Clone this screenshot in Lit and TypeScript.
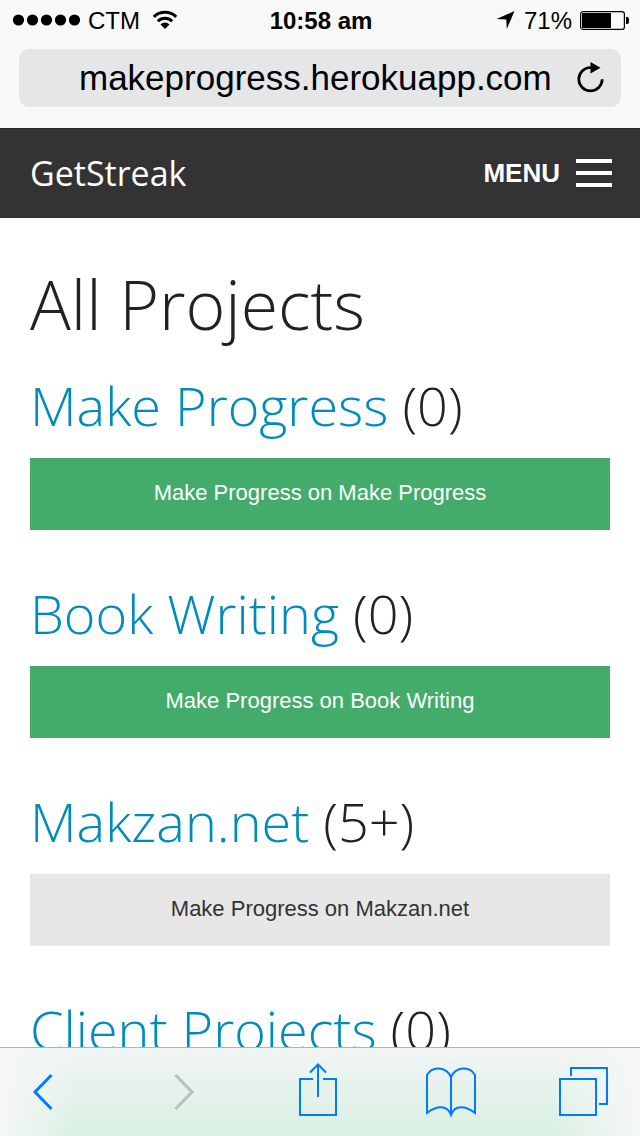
import { LitElement, html, css, nothing } from "lit";
import { customElement } from "lit/decorators.js";

interface Project { name: string; count: string; action?: "due" | "done"; }

const projects: Project[] = [
  { name: "Make Progress", count: "0", action: "due" },
  { name: "Book Writing", count: "0", action: "due" },
  { name: "Makzan.net", count: "5+", action: "done" },
  { name: "Client Projects", count: "0" },
];

@customElement("app-root")
export class AppRoot extends LitElement {
  static styles = css`
    :host { display: flex; flex-direction: column; height: 100vh; overflow: hidden; background: #fff; color: #222; font-family: "Liberation Sans", Arial, sans-serif; }
    * { box-sizing: border-box; }
    svg { display: block; overflow: visible; }
    button { border: 0; padding: 0; background: none; font-family: inherit; cursor: pointer; }
    .browser { flex: none; padding-bottom: 21px; background: #f8f8f8; }
    .status { display: grid; grid-template-columns: 1fr auto 1fr; align-items: center; height: 42px; padding: 0 11px 0 13px; font-size: 24px; color: #000; }
    .status svg { margin-bottom: 2px; }
    .left, .right { display: flex; align-items: center; gap: 8px; }
    .right { justify-content: flex-end; }
    .carrier { margin-right: 4px; }
    .time { font-weight: 700; }
    .address { display: flex; align-items: center; margin: 7px 19px 0; height: 58px; padding: 0 16px 0 60px; border-radius: 10px; background: #e5e6e8; }
    .url { flex: 1; min-width: 0; height: 56px; border: 0; padding: 0; background: none; text-align: left; font: 35px "Liberation Sans", Arial, sans-serif; color: #000; }
    .bar { flex: none; display: flex; align-items: center; justify-content: space-between; height: 90px; padding: 0 28px 0 30px; box-shadow: inset 0 1px #262626; background: #333; }
    .brand { font: 34px "Open Sans", sans-serif; color: #fff; text-decoration: none; }
    .menu { display: flex; align-items: center; gap: 16px; color: #fff; font-size: 26px; font-weight: 700; }
    .page { flex: 1; min-height: 0; overflow: hidden; padding: 40px 30px 0; }
    h1, h2 { margin: 0; font-family: "Open Sans", sans-serif; font-weight: 300; }
    h1 { margin-bottom: 20px; font-size: 68px; line-height: 92px; }
    h2 { margin-bottom: 18px; font-size: 54px; line-height: 70px; }
    h2 a { color: #008cba; text-decoration: none; }
    .project { padding-bottom: 48px; }
    .log { display: block; width: 100%; height: 72px; padding-bottom: 2px; font-size: 22px; }
    .due { background: #43ac6a; color: #fff; }
    .done { background: #e7e7e7; color: #333; }
    .tools {
      flex: none; display: flex; justify-content: space-between; align-items: center; height: 89px; padding: 0 30px 0 22px; border-top: 1px solid #b2b2b2; color: #007aff;
      background: linear-gradient(to right, #f6f7f7, rgba(246, 247, 247, 0) 12%, rgba(246, 247, 247, 0) 86%, #f6f7f7), linear-gradient(#f0f5f4, #d9efe2);
    }
    .tools button { color: inherit; }
    .tools button:disabled { color: #b6c0bb; }
    .line { fill: none; stroke: currentColor; stroke-width: 2; }
    .thick { fill: none; stroke: currentColor; stroke-width: 3; }
  `;

  render() {
    return html`
      <header class="browser">
        <div class="status">
          <div class="left">
            <svg width="67" height="12" role="img" aria-label="Signal strength">
              <circle cx="5.5" cy="6" r="5.6" /><circle cx="19.5" cy="6" r="5.6" /><circle cx="33.5" cy="6" r="5.6" /><circle cx="47.5" cy="6" r="5.6" /><circle cx="61.5" cy="6" r="5.6" />
            </svg>
            <span class="carrier">CTM</span>
            <svg width="26" height="20" viewBox="0 0 26 20" role="img" aria-label="Wi-Fi">
              <path d="M1.8 6.9a16 16 0 0 1 22.4 0M5.8 11.200a10.200 10.200 0 0 1 14.400 0" fill="none" stroke="#000" stroke-width="3" />
              <path d="M13 19l-4.500-4.600a6.400 6.400 0 0 1 9 0z" />
            </svg>
          </div>
          <span class="time">10:58 am</span>
          <div class="right">
            <svg width="20" height="18" viewBox="0 0 20 18" role="img" aria-label="Location in use"><path d="M18.500 0L10.800 18L10.300 8.500L.5 8z" /></svg>
            <span>71%</span>
            <svg width="49" height="19" viewBox="0 0 49 19" role="img" aria-label="Battery">
              <rect x=".6" y=".6" width="43.8" height="17.8" rx="2.5" fill="none" stroke="#000" stroke-width="1.2" />
              <path d="M2 2h29v15H2zM46 6h1.500q1.500 0 1.500 3.500t-1.500 3.500H46z" />
            </svg>
          </div>
        </div>
        <div class="address">
          <input class="url" aria-label="Address" value="makeprogress.herokuapp.com" />
          <button aria-label="Reload">
            <svg width="28" height="32" viewBox="0 0 28 32"><path d="M15 5.500H13.500A11.700 11.700 0 1 0 25.200 17.200" fill="none" stroke="#000" stroke-width="2.700" /><path d="M13.500 0L23.500 5.700L13.500 11.500z" /></svg>
          </button>
        </div>
      </header>
      <nav class="bar">
        <a class="brand" href="#">GetStreak</a>
        <button class="menu">MENU
          <svg width="36" height="28" viewBox="0 0 36 28" fill="#fff" aria-hidden="true"><path d="M0 0h36v4H0zM0 12h36v4H0zM0 24h36v4H0z" /></svg>
        </button>
      </nav>
      <main class="page">
        <h1>All Projects</h1>
        ${projects.map((p) => html`<section class="project">
          <h2><a href="#">${p.name}</a> (${p.count})</h2>
          ${p.action ? html`<button class="log ${p.action}">Make Progress on ${p.name}</button>` : nothing}
        </section>`)}
      </main>
      <footer class="tools">
        <button aria-label="Back"><svg width="52" height="56"><path class="thick" d="M29.500 11L13 28L29.500 45" /></svg></button>
        <button aria-label="Forward" disabled><svg width="52" height="56"><path class="thick" d="M19.500 11L36 28L19.500 45" /></svg></button>
        <button aria-label="Share"><svg width="52" height="56"><path class="line" d="M23 15H10V51H46V15H33M28 33V1M20 8.500L28 .5L36 8.500" /></svg></button>
        <button aria-label="Bookmarks"><svg width="52" height="56"><path class="line" d="M27 51V13C22 2 8 2 3 11V49C12 42 23 40 27 51C31 40 42 42 51 49V11C46 2 32 2 27 13" /></svg></button>
        <button aria-label="Tabs"><svg width="52" height="56"><path class="line" d="M2 15H38V51H2zM13 12V4H49V40H41" /></svg></button>
      </footer>`;
  }
}
